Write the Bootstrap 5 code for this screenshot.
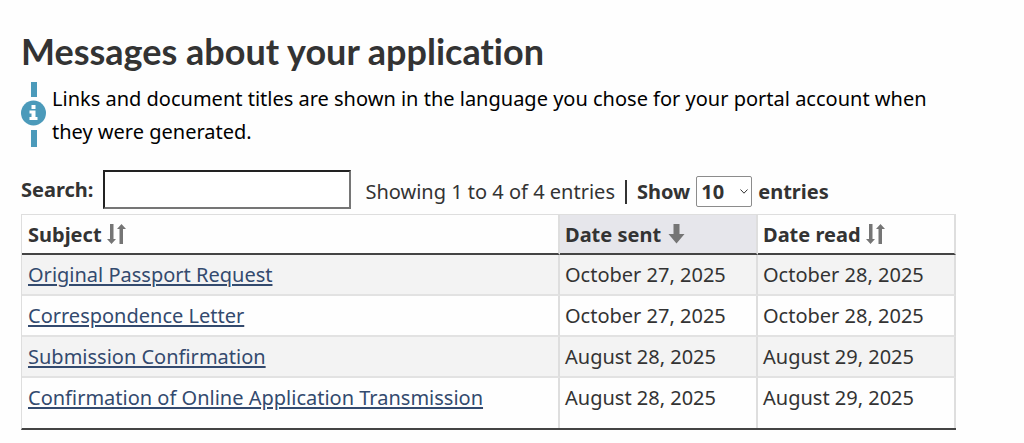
<!DOCTYPE html>
<html lang="en">
<head>
<meta charset="utf-8">
<meta name="viewport" content="width=device-width, initial-scale=1">
<title>Messages about your application</title>
<link href="https://cdn.jsdelivr.net/npm/bootstrap@5.3.0/dist/css/bootstrap.min.css" rel="stylesheet">
<style>
body { font-family: "Noto Sans", sans-serif; font-size: 20px; line-height: 28px; color: #333; background: #fefefe; }
.page { padding: 31px 68px 14px 21px; }
h1 { font-family: Lato, sans-serif; font-size: 36px; line-height: 40px; font-weight: 700; font-variant-ligatures: none; }
.notice { color: #000; line-height: 33px; gap: 5px; margin-top: 11px; }
.notice svg { width: 26px; height: 66px; }
.tools { gap: 10px; margin: 22px 0 5px; }
.search-box { width: 248px; height: 39px; border: 2px solid; border-color: #222 #767676 #767676 #222; border-radius: 0; padding: 2px 6px; }
.table-info-bar { gap: 10px; }
.divider { width: 2px; height: 24px; background: #333; }
.length-control { gap: 6px; }
.length-select { width: 56px; height: 31px; font-weight: 700; font-size: 20px; line-height: 28px; color: #333; border: 1px solid #8c8c8c; border-radius: 2px; background: #fff; padding: 0 4px; appearance: none; }
.chevron { right: 4px; top: 12px; pointer-events: none; }
.messages { table-layout: fixed; border-collapse: separate; border-spacing: 0; border: solid #dedede; border-width: 1px 0 0 1px; border-bottom: 2px solid #444; }
.messages th, .messages td { line-height: 28px; border-right: 2px solid #dedede; }
.messages th { height: 40px; padding: 6px 5px 4px; border-bottom: 2px solid #444; }
.messages td { height: 41px; padding: 6px 5px 5px; border-bottom: 2px solid #e2e2e2; }
.messages th:first-child, .messages td:first-child { padding-left: 6px; }
.messages tbody tr:nth-child(odd) { background: #f3f3f3; }
.messages tbody tr:last-child td { border-bottom: 0; height: 50px; vertical-align: top; }
.messages .sorted { background: #e6e6eb; }
.messages a { color: #334a6e; text-decoration-thickness: 2px; text-underline-offset: 2px; }
.col-date { width: 198px; }
.sort { font-weight: 700; color: inherit; line-height: 28px; gap: 5px; }
.sort svg { margin-bottom: 3px; }
</style>
</head>
<body>
<main class="page">
  <h1 class="m-0">Messages about your application</h1>
  <div class="notice d-flex align-items-start">
    <svg class="flex-shrink-0" viewBox="0 0 26 66" aria-hidden="true">
      <path fill="#4b9aba" d="M10 0h6v15h-6zM10 48h6v17h-6z"/>
      <circle cx="12.500" cy="31" r="12.500" fill="#4b9aba"/>
      <path fill="#fff" d="M10.500 23h4v4h-4zM8.500 28.500h6v6.500h2v3h-8v-3h2v-3.500h-2z"/>
    </svg>
    <p class="m-0">Links and document titles are shown in the language you chose for your portal account when they were generated.</p>
  </div>
  <div class="tools d-flex flex-wrap align-items-center">
    <label class="fw-bold" for="search">Search:</label>
    <input class="search-box bg-white" type="search" id="search">
    <div class="table-info-bar d-flex align-items-center pt-1 ms-1">
      <span>Showing 1 to 4 of 4 entries</span>
      <span class="divider"></span>
      <span class="length-control d-flex align-items-center fw-bold">
        <label for="length">Show</label>
        <span class="position-relative d-flex">
          <select class="length-select" id="length"><option>10</option><option>25</option><option>50</option></select>
          <svg class="chevron position-absolute" width="8" height="7" viewBox="0 0 8 7" aria-hidden="true"><path d="M.5 1.500 4 5.200 7.500 1.500" fill="none" stroke="#333"/></svg>
        </span>
        <span>entries</span>
      </span>
    </div>
  </div>
  <table class="messages w-100">
    <colgroup><col><col class="col-date"><col class="col-date"></colgroup>
    <thead>
      <tr>
        <th scope="col"><button type="button" class="sort border-0 bg-transparent p-0 d-flex align-items-center">Subject
          <svg width="20" height="20" viewBox="0 0 20 20" aria-hidden="true"><path fill="#757575" d="M3 0h3.500v15H9l-4.500 5L0 15h3zM12.500 20H16V5h3l-4.500-5L10 5h2.500z"/></svg></button></th>
        <th scope="col" class="sorted" aria-sort="descending"><button type="button" class="sort border-0 bg-transparent p-0 d-flex align-items-center">Date sent
          <svg width="20" height="20" viewBox="0 0 20 20" aria-hidden="true"><path fill="#757575" d="M7.500 0h6v10h5l-8 9.500L2.500 10h5z"/></svg></button></th>
        <th scope="col"><button type="button" class="sort border-0 bg-transparent p-0 d-flex align-items-center">Date read
          <svg width="20" height="20" viewBox="0 0 20 20" aria-hidden="true"><path fill="#757575" d="M3 0h3.500v15H9l-4.500 5L0 15h3zM12.500 20H16V5h3l-4.500-5L10 5h2.500z"/></svg></button></th>
      </tr>
    </thead>
    <tbody>
      <tr><td><a href="#">Original Passport Request</a></td><td>October 27, 2025</td><td>October 28, 2025</td></tr>
      <tr><td><a href="#">Correspondence Letter</a></td><td>October 27, 2025</td><td>October 28, 2025</td></tr>
      <tr><td><a href="#">Submission Confirmation</a></td><td>August 28, 2025</td><td>August 29, 2025</td></tr>
      <tr><td><a href="#">Confirmation of Online Application Transmission</a></td><td>August 28, 2025</td><td>August 29, 2025</td></tr>
    </tbody>
  </table>
</main>
<script src="https://cdn.jsdelivr.net/npm/bootstrap@5.3.0/dist/js/bootstrap.bundle.min.js"></script>
</body>
</html>
